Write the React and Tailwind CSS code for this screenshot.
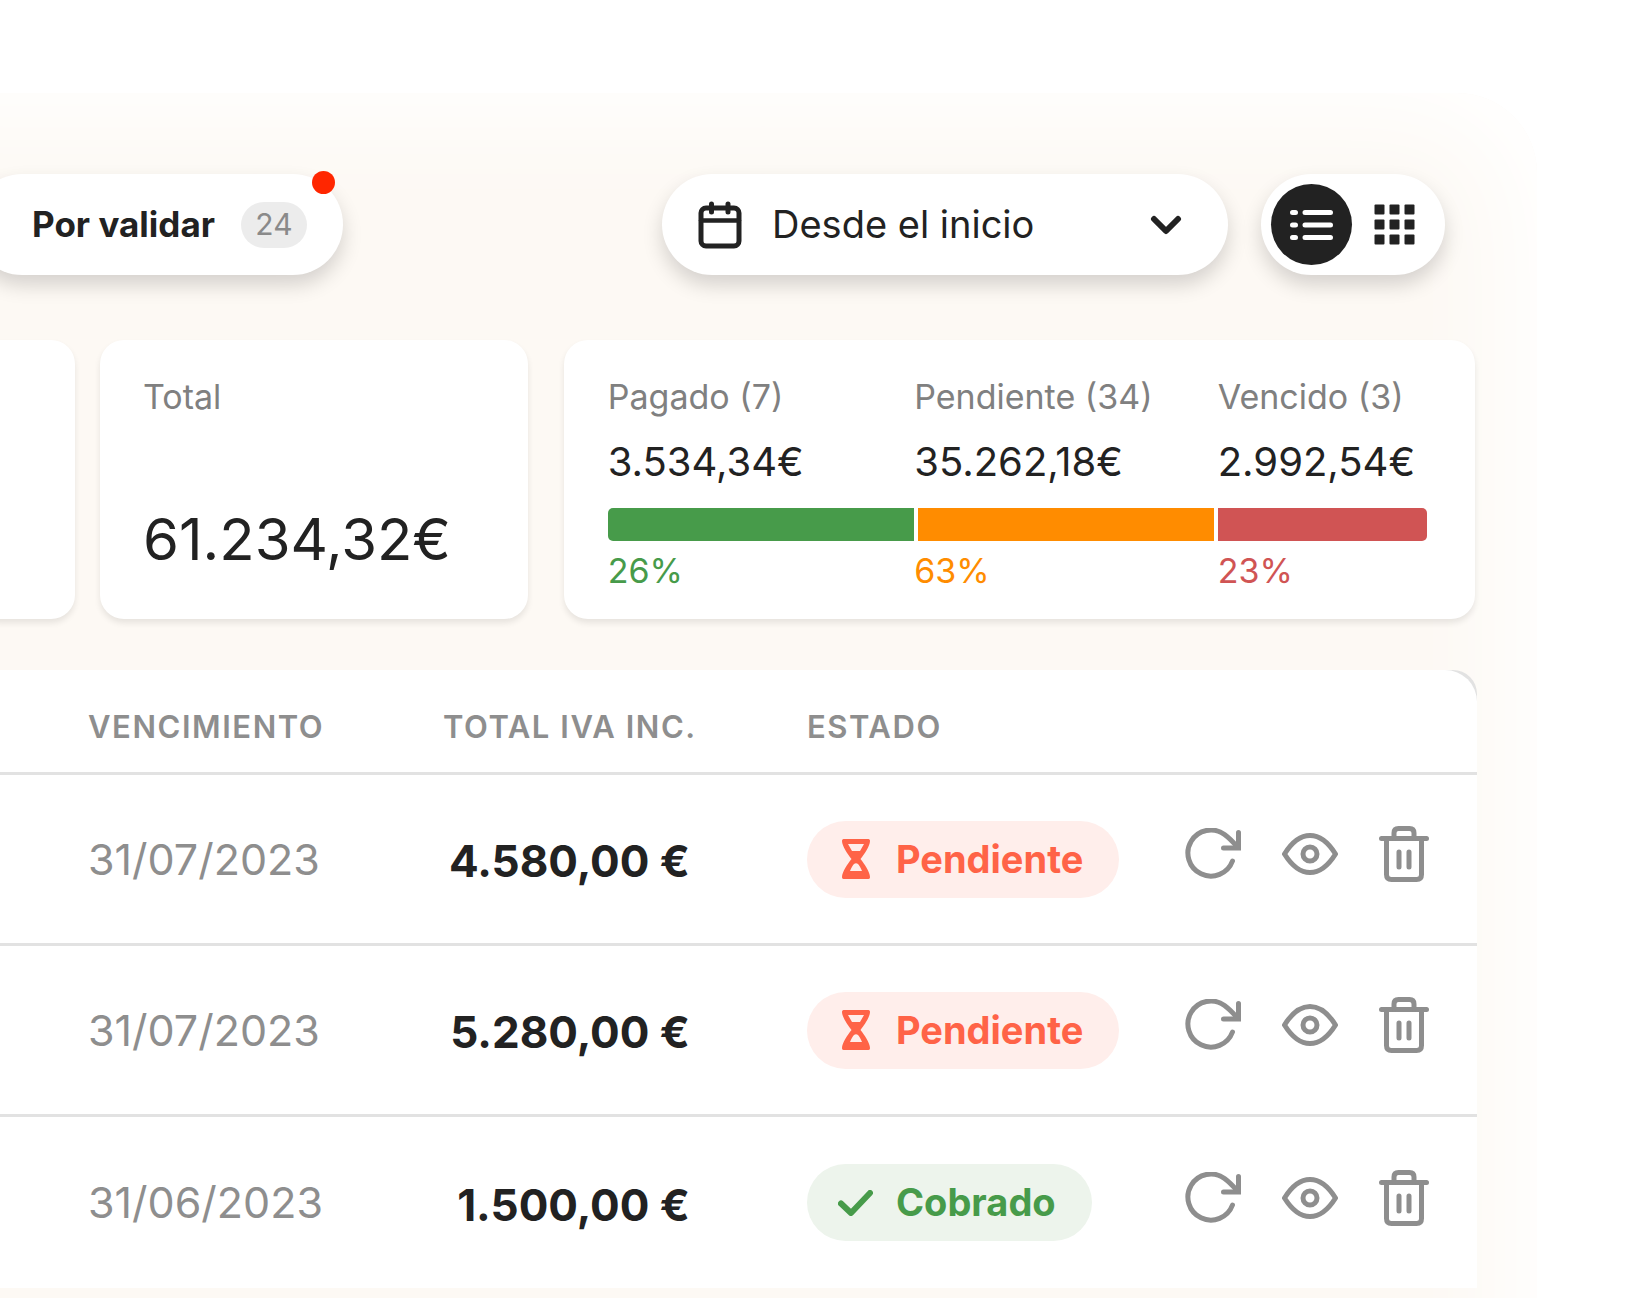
import React, { useState } from "react";

const periods = ["Desde el inicio", "Este mes", "Este trimestre", "Este año"];

const summary = [
    {
        label: "Pagado (7)",
        amount: "3.534,34€",
        percent: "26%",
        column: "flex-[306]",
        bar: "bg-[#479b4a] rounded-l-[5px]",
        text: "text-[#479b4a]",
    },
    {
        label: "Pendiente (34)",
        amount: "35.262,18€",
        percent: "63%",
        column: "flex-[303]",
        bar: "mx-1 bg-[#ff8c00]",
        text: "text-[#ff8c00]",
    },
    {
        label: "Vencido (3)",
        amount: "2.992,54€",
        percent: "23%",
        column: "flex-[209]",
        bar: "bg-[#d05454] rounded-r-[5px]",
        text: "text-[#d05454]",
    },
];

const invoices = [
    { id: 1, due: "31/07/2023", total: "4.580,00 €", status: "pending" },
    { id: 2, due: "31/07/2023", total: "5.280,00 €", status: "pending" },
    { id: 3, due: "31/06/2023", total: "1.500,00 €", status: "paid" },
];

function CalendarIcon() {
    return (
        <svg width="44" height="48" viewBox="0 0 44 48" fill="none" stroke="currentColor" strokeWidth="5" strokeLinecap="round" aria-hidden="true">
            <rect x="3" y="7" width="38" height="38" rx="5" />
            <path d="M3 19.5h38" strokeWidth="4.5" />
            <path d="M13.5 3v8M30 3v8" />
        </svg>
    );
}

function ChevronIcon() {
    return (
        <svg width="32" height="20" viewBox="0 0 32 20" fill="none" stroke="currentColor" strokeWidth="6" strokeLinecap="round" strokeLinejoin="round" aria-hidden="true">
            <path d="M4 4l12 12L28 4" />
        </svg>
    );
}

function ListIcon() {
    return (
        <svg width="44" height="32" viewBox="0 0 44 32" fill="none" stroke="currentColor" strokeWidth="5" strokeLinecap="round" aria-hidden="true">
            <path d="M2.5 3.5h3M2.5 16h3M2.5 28.5h3" />
            <path d="M15 3.5h25.500M15 16h25.500M15 28.5h25.500" />
        </svg>
    );
}

function GridIcon() {
    const cells = [0, 15, 30];
    return (
        <svg width="41" height="41" viewBox="0 0 41 41" fill="currentColor" aria-hidden="true">
            {cells.map((y) => cells.map((x) => (
                <rect key={`${x}-${y}`} x={x + 0.5} y={y + 0.5} width="10" height="10" rx="1" />
            )))}
        </svg>
    );
}

function HourglassIcon() {
    return (
        <svg width="28" height="40" viewBox="0 0 28 40" fill="currentColor" fillRule="evenodd" aria-hidden="true">
            <path d="M1.500 0h25c1 0 1.500 1 1.500 2 0 5-6 13.500-9.500 18 3.500 4.500 9.500 13 9.500 18 0 1-.5 2-1.500 2h-25C.5 40 0 39 0 38c0-5 6-13.500 9.500-18C6 15.500 0 7 0 2 0 1 .5 0 1.500 0zM6 5l4 7h8l4-7zM8 32h12c-1.500-3.500-3-6-4-7q-2-1.500-4 0c-1 1-2.500 3.500-4 7z" />
        </svg>
    );
}

function CheckIcon() {
    return (
        <svg width="35" height="26" viewBox="0 0 35 26" fill="none" stroke="currentColor" strokeWidth="6" strokeLinecap="round" strokeLinejoin="round" aria-hidden="true">
            <path d="M3 13.500l10 9.500L32 3" />
        </svg>
    );
}

function RefreshIcon() {
    return (
        <svg width="56" height="52" viewBox="0 0 56 52" fill="none" stroke="currentColor" strokeWidth="5" strokeLinecap="round" aria-hidden="true">
            <path d="M47.500 33A23 23 0 1 1 39.500 6.500Q45 10.500 52.500 19" />
            <path d="M53.500 4.500V20H38.500" />
        </svg>
    );
}

function EyeIcon() {
    return (
        <svg width="56" height="42" viewBox="0 0 56 42" fill="none" stroke="currentColor" strokeWidth="5" strokeLinejoin="round" aria-hidden="true">
            <path d="M2.500 21Q14 2.500 28 2.500T53.500 21Q42 39.500 28 39.500T2.500 21z" />
            <circle cx="28" cy="21" r="7" />
        </svg>
    );
}

function TrashIcon() {
    return (
        <svg width="50" height="56" viewBox="0 0 50 56" fill="none" stroke="currentColor" strokeWidth="5" strokeLinecap="round" aria-hidden="true">
            <path d="M2.500 12.500h45" />
            <path d="M15 12V7q0-4.500 4.500-4.500h11Q35 2.500 35 7v5" />
            <path d="M7.500 13v35.500q0 5 5 5h25q5 0 5-5V13" />
            <path d="M20 26v15M30 26v15" />
        </svg>
    );
}

function Toolbar() {
    const [period, setPeriod] = useState(periods[0]);
    const [view, setView] = useState("list");

    return (
        <div className="flex items-center mr-8">
            <button
                type="button"
                className="relative -ml-7 flex h-[101px] items-center gap-[26px] rounded-full bg-white pl-[60px] pr-9 shadow-[0_10px_20px_rgba(0,0,0,0.16)]"
            >
                <span className="text-[35px] font-bold">Por validar</span>
                <span className="flex h-[46px] w-[66px] items-center justify-center rounded-full bg-[#ececec] text-[30px] text-[#8a8a8a]">
                    24
                </span>
                <span className="absolute right-2 -top-[3px] size-[23px] rounded-full bg-[#ff2600]" />
            </button>

            <label className="ml-auto flex h-[101px] w-[566px] items-center rounded-full bg-white pl-9 pr-[46px] shadow-[0_10px_20px_rgba(0,0,0,0.16)]">
                <CalendarIcon />
                <select
                    aria-label="Periodo"
                    value={period}
                    onChange={(e) => setPeriod(e.target.value)}
                    className="ml-[30px] min-w-0 flex-1 appearance-none bg-transparent text-[38px] outline-none"
                >
                    {periods.map((p) => (
                        <option key={p}>{p}</option>
                    ))}
                </select>
                <ChevronIcon />
            </label>

            <div className="ml-[33px] flex h-[101px] w-[184px] items-center gap-0.5 rounded-full bg-white pl-2.5 shadow-[0_10px_20px_rgba(0,0,0,0.16)]">
                <button
                    type="button"
                    aria-label="Vista de lista"
                    aria-pressed={view === "list"}
                    onClick={() => setView("list")}
                    className={`flex size-[81px] items-center justify-center rounded-full ${view === "list" ? "bg-[#222222] text-white" : ""}`}
                >
                    <ListIcon />
                </button>
                <button
                    type="button"
                    aria-label="Vista de cuadrícula"
                    aria-pressed={view === "grid"}
                    onClick={() => setView("grid")}
                    className={`flex size-[81px] items-center justify-center rounded-full ${view === "grid" ? "bg-[#222222] text-white" : ""}`}
                >
                    <GridIcon />
                </button>
            </div>
        </div>
    );
}

function SummaryCards() {
    return (
        <div className="mt-[65px] mr-0.5 flex h-[279px]">
            <div className="-ml-6 w-[99px] shrink-0 rounded-3xl bg-white shadow-[0_4px_6px_rgba(0,0,0,0.09)]" />

            <div className="ml-[25px] flex w-[29%] flex-col justify-between rounded-3xl bg-white pl-[43px] pt-[35px] pb-[42px] shadow-[0_4px_6px_rgba(0,0,0,0.09)]">
                <h2 className="text-[34px] leading-[44px] text-[#808080]">Total</h2>
                <p className="text-[58px] leading-[76px]">61.234,32€</p>
            </div>

            <div className="ml-9 flex flex-1 rounded-3xl bg-white pr-12 pl-11 pt-[35px] shadow-[0_4px_6px_rgba(0,0,0,0.09)]">
                {summary.map((item) => (
                    <div key={item.label} className={`min-w-0 whitespace-nowrap ${item.column}`}>
                        <h2 className="text-[34px] leading-[44px] text-[#808080]">{item.label}</h2>
                        <p className="mt-[17px] text-[40px] leading-[52px]">{item.amount}</p>
                        <div className={`mt-5 h-[33px] ${item.bar}`} />
                        <p className={`mt-2 text-[34px] leading-[44px] ${item.text}`}>{item.percent}</p>
                    </div>
                ))}
            </div>
        </div>
    );
}

function StatusBadge({ status }) {
    const paid = status === "paid";
    return (
        <span
            className={`inline-flex h-[77px] items-center rounded-full pr-9 text-[38px] font-bold ${paid ? "bg-[#edf4ec] text-[#479b4a]" : "bg-[#ffeeeb] text-[#ff6347]"}`}
        >
            <span className="flex w-[89px] justify-center pl-2">
                {paid ? <CheckIcon /> : <HourglassIcon />}
            </span>
            {paid ? "Cobrado" : "Pendiente"}
        </span>
    );
}

function InvoiceTable() {
    return (
        <div className="mt-[51px] rounded-tr-[24px] bg-[#e2e2e2]">
            <table className="w-full table-fixed border-separate border-spacing-0 rounded-tr-[32px] bg-white text-left">
                <thead>
                    <tr className="h-[105px] text-[31px] tracking-wider text-[#8e8e8e] [&>th]:border-b-3 [&>th]:border-[#e2e2e2] [&>th]:pt-3 [&>th]:font-semibold">
                        <th className="w-[443px] pl-[88px]">VENCIMIENTO</th>
                        <th className="w-[364px]">TOTAL IVA INC.</th>
                        <th className="w-[376px]">ESTADO</th>
                        <th aria-label="Acciones" />
                    </tr>
                </thead>
                <tbody>
                    {invoices.map((invoice) => (
                        <tr key={invoice.id} className="h-[171px] [&:not(:last-child)>td]:border-b-3 [&>td]:border-[#e2e2e2]">
                            <td className="pl-[88px] text-[43px] text-[#8e8e8e]">{invoice.due}</td>
                            <td className="pt-1 pr-[117px] text-right text-[44px] font-bold whitespace-nowrap">{invoice.total}</td>
                            <td>
                                <StatusBadge status={invoice.status} />
                            </td>
                            <td>
                                <div className="flex items-center gap-[41px] pb-2.5 pl-0.5 text-[#8e8e8e]">
                                    <button type="button" aria-label="Reenviar">
                                        <RefreshIcon />
                                    </button>
                                    <button type="button" aria-label="Ver">
                                        <EyeIcon />
                                    </button>
                                    <button type="button" aria-label="Eliminar">
                                        <TrashIcon />
                                    </button>
                                </div>
                            </td>
                        </tr>
                    ))}
                </tbody>
            </table>
        </div>
    );
}

export default function App() {
    return (
        <div className="h-screen overflow-hidden bg-white pt-[93px] font-['Inter',sans-serif] text-[#222222]">
            {/* cream panel that fades out towards the top and the right */}
            <div className="mr-[114px] -ml-40 rounded-tr-[80px] bg-[#fdf9f4] pt-[81px] pr-[60px] pb-40 pl-40 shadow-[inset_-32px_24px_110px_#ffffff]">
                <Toolbar />
                <SummaryCards />
                <InvoiceTable />
            </div>
        </div>
    );
}
